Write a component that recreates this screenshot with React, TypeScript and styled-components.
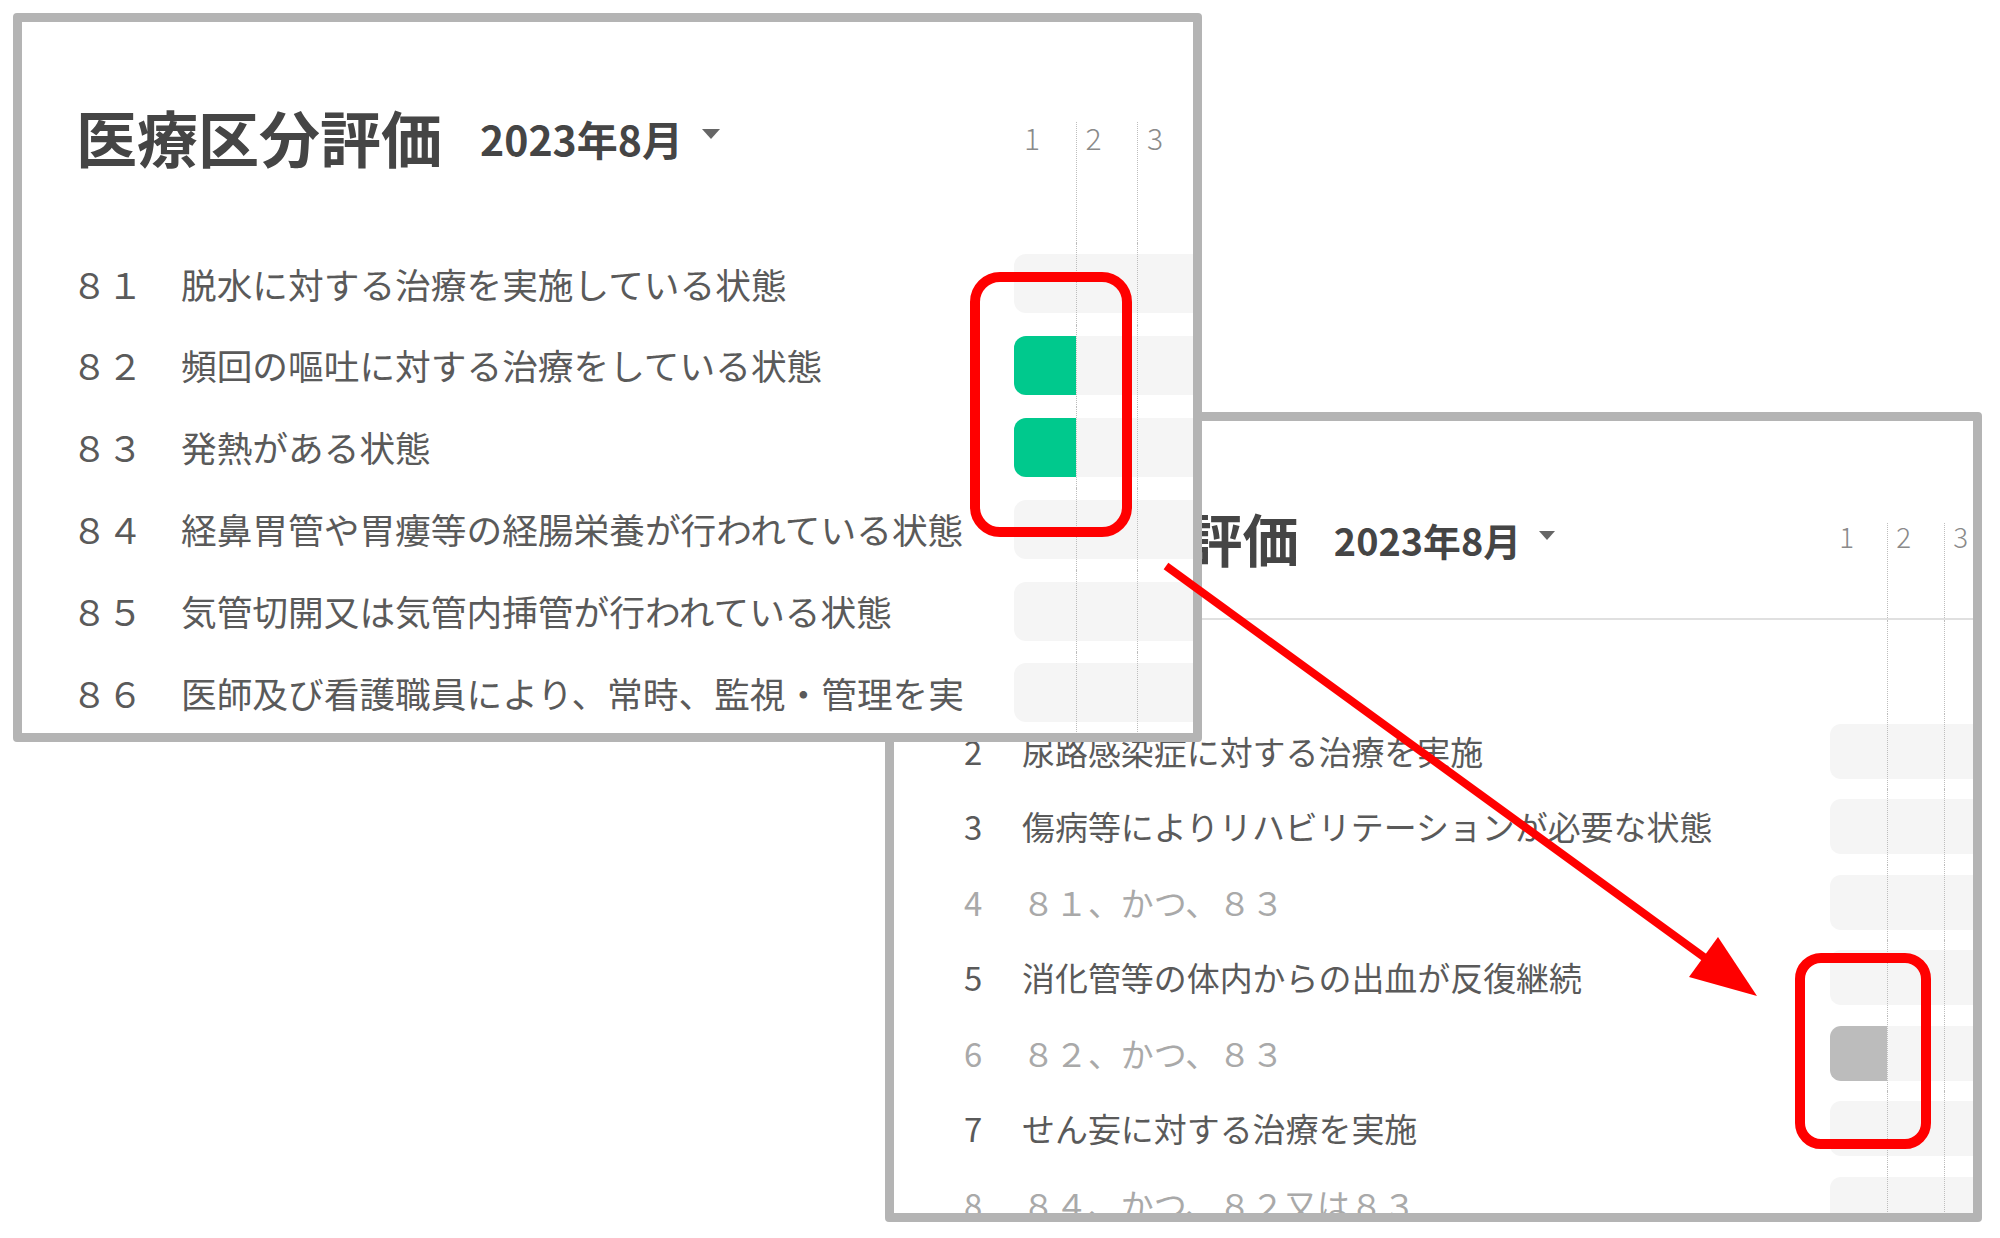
import React from "react";
import styled, { createGlobalStyle, css } from "styled-components";

type Frame = { x: number; y: number; w: number; h: number; z: number };

type Layout = {
  s: number;
  lead: number;
  col: number;
  titleLeft: number;
  titleTop: number;
  headTop: number;
  headH: number;
  divider: boolean;
  gapH: number;
  numLeft: number;
  numW: number;
  textW: number;
  rowH: number;
  barH: number;
};

type Item = { no: string; text: string; fill?: string; muted?: boolean };

const GREEN = "#00c98d";
const GREY_FILL = "#bcbcbc";

const firstItems: Item[] = [
  { no: "８１", text: "脱水に対する治療を実施している状態" },
  { no: "８２", text: "頻回の嘔吐に対する治療をしている状態", fill: GREEN },
  { no: "８３", text: "発熱がある状態", fill: GREEN },
  { no: "８４", text: "経鼻胃管や胃瘻等の経腸栄養が行われている状態" },
  { no: "８５", text: "気管切開又は気管内挿管が行われている状態" },
  { no: "８６", text: "医師及び看護職員により、常時、監視・管理を実施している状態" },
];

const secondItems: Item[] = [
  { no: "2", text: "尿路感染症に対する治療を実施" },
  { no: "3", text: "傷病等によりリハビリテーションが必要な状態" },
  { no: "4", text: "８１、かつ、８３", muted: true },
  { no: "5", text: "消化管等の体内からの出血が反復継続" },
  { no: "6", text: "８２、かつ、８３", muted: true, fill: GREY_FILL },
  { no: "7", text: "せん妄に対する治療を実施" },
  { no: "8", text: "８４、かつ、８２又は８３", muted: true },
];

const firstLayout: Layout = {
  s: 1,
  lead: 992,
  col: 61.5,
  titleLeft: 54,
  titleTop: 77.5,
  headTop: 100,
  headH: 221,
  divider: false,
  gapH: 0,
  numLeft: 49.5,
  numW: 109.5,
  textW: 784,
  rowH: 81.8,
  barH: 59,
};

const secondLayout: Layout = {
  s: 0.923,
  lead: 936,
  col: 57,
  titleLeft: 67,
  titleTop: 83,
  headTop: 102,
  headH: 197,
  divider: true,
  gapH: 93.5,
  numLeft: 70,
  numW: 58,
  textW: 760,
  rowH: 75.5,
  barH: 55,
};

const GlobalStyle = createGlobalStyle`
  html, body {
    margin: 0;
    padding: 0;
    background: #fff;
  }
  body {
    font-family: "Noto Sans CJK JP", "Noto Sans", sans-serif;
  }
  * {
    box-sizing: border-box;
  }
`;

const Canvas = styled.div`
  position: relative;
  width: 2000px;
  height: 1238px;
  overflow: hidden;
  background: #fff;
`;

const Window = styled.section<{ $f: Frame }>`
  position: absolute;
  left: ${(p) => p.$f.x}px;
  top: ${(p) => p.$f.y}px;
  width: ${(p) => p.$f.w}px;
  height: ${(p) => p.$f.h}px;
  z-index: ${(p) => p.$f.z};
  display: flex;
  flex-direction: column;
  border: 9px solid #b4b4b4;
  border-radius: 4px;
  background: #fff;
  overflow: hidden;
`;

const Header = styled.header<{ $l: Layout }>`
  flex-shrink: 0;
  display: grid;
  grid-template-columns: ${(p) => p.$l.lead}px repeat(3, ${(p) => p.$l.col}px);
  height: ${(p) => p.$l.headH + (p.$l.divider ? 2 : 0)}px;
  ${(p) =>
    p.$l.divider &&
    css`
      border-bottom: 2px solid #e0e0e0;
    `}
`;

const TitleRow = styled.div<{ $l: Layout }>`
  align-self: start;
  display: flex;
  align-items: center;
  margin-top: ${(p) => p.$l.titleTop}px;
  padding-left: ${(p) => p.$l.titleLeft}px;
  white-space: nowrap;
`;

const Title = styled.h1<{ $s: number }>`
  margin: 0;
  font-size: ${(p) => 61 * p.$s}px;
  line-height: 1.2;
  font-weight: 700;
  color: #454545;
`;

const Month = styled.span<{ $s: number }>`
  margin-left: ${(p) => 38 * p.$s}px;
  padding-top: ${(p) => 4 * p.$s}px;
  font-size: ${(p) => 41 * p.$s}px;
  line-height: 1.2;
  font-weight: 700;
  color: #454545;
`;

const Caret = styled.span<{ $s: number }>`
  width: 0;
  height: 0;
  margin-left: ${(p) => 19 * p.$s}px;
  margin-top: ${(p) => -5 * p.$s}px;
  border-left: ${(p) => 9 * p.$s}px solid transparent;
  border-right: ${(p) => 9 * p.$s}px solid transparent;
  border-top: ${(p) => 10 * p.$s}px solid #666;
`;

const ColumnCell = styled.div<{ $line: boolean }>`
  position: relative;
  display: flex;
  align-items: center;
  ${(p) =>
    p.$line &&
    css`
      &::before {
        content: "";
        position: absolute;
        left: 0;
        top: 0;
        bottom: 0;
        border-left: 1px dotted #bdbdbd;
        z-index: 1;
      }
    `}
`;

const HeadCell = styled(ColumnCell)<{ $l: Layout }>`
  align-items: flex-start;
  margin-top: ${(p) => p.$l.headTop}px;
  padding-left: ${(p) => 10 * p.$l.s}px;
  font-size: ${(p) => 30 * p.$l.s}px;
  line-height: ${(p) => 30 * p.$l.s}px;
  font-weight: 300;
  color: #8a8a8a;
`;

const List = styled.div`
  display: flex;
  flex-direction: column;
`;

const Row = styled.div<{ $l: Layout; $h?: number }>`
  flex-shrink: 0;
  display: grid;
  grid-template-columns: ${(p) => p.$l.lead}px repeat(3, ${(p) => p.$l.col}px);
  height: ${(p) => p.$h ?? p.$l.rowH}px;
`;

const Label = styled.div<{ $l: Layout; $muted?: boolean }>`
  display: flex;
  align-items: center;
  padding-left: ${(p) => p.$l.numLeft}px;
  font-size: ${(p) => 35.7 * p.$l.s}px;
  line-height: 1.3;
  color: ${(p) => (p.$muted ? "#a9a9a9" : "#5a5a5a")};
  white-space: nowrap;
`;

const Num = styled.span<{ $w: number }>`
  flex-shrink: 0;
  width: ${(p) => p.$w}px;
`;

const Text = styled.span<{ $w: number }>`
  max-width: ${(p) => p.$w}px;
  overflow: hidden;
`;

const Seg = styled.div<{ $h: number; $fill: string; $r: number }>`
  width: 100%;
  height: ${(p) => p.$h}px;
  background: ${(p) => p.$fill};
  border-radius: ${(p) => (p.$r ? `${p.$r}px 0 0 ${p.$r}px` : "0")};
`;

const Marks = styled.svg`
  position: absolute;
  left: 0;
  top: 0;
  z-index: 10;
  pointer-events: none;
`;

const BAR_BG = "#f5f5f5";

const ChartCells = ({ l, fill }: { l: Layout; fill?: string | null }) => (
  <>
    {[0, 1, 2].map((i) => (
      <ColumnCell key={i} $line={i > 0}>
        {fill !== null && (
          <Seg
            $h={l.barH}
            $fill={i === 0 && fill ? fill : BAR_BG}
            $r={i === 0 ? 12 * l.s : 0}
          />
        )}
      </ColumnCell>
    ))}
  </>
);

const Panel = ({ frame, l, items }: { frame: Frame; l: Layout; items: Item[] }) => (
  <Window $f={frame}>
    <Header $l={l}>
      <TitleRow $l={l}>
        <Title $s={l.s}>医療区分評価</Title>
        <Month $s={l.s}>2023年8月</Month>
        <Caret $s={l.s} />
      </TitleRow>
      {["1", "2", "3"].map((n, i) => (
        <HeadCell key={n} $l={l} $line={i > 0}>
          {n}
        </HeadCell>
      ))}
    </Header>
    <List>
      {l.gapH > 0 && (
        <Row $l={l} $h={l.gapH}>
          <div />
          <ChartCells l={l} fill={null} />
        </Row>
      )}
      {items.map((it) => (
        <Row key={it.no} $l={l}>
          <Label $l={l} $muted={it.muted}>
            <Num $w={l.numW}>{it.no}</Num>
            <Text $w={l.textW}>{it.text}</Text>
          </Label>
          <ChartCells l={l} fill={it.fill} />
        </Row>
      ))}
    </List>
  </Window>
);

const App = () => {
  return (
    <>
      <GlobalStyle />
      <Canvas>
        <Panel
          frame={{ x: 885, y: 412, w: 1097, h: 810, z: 1 }}
          l={secondLayout}
          items={secondItems}
        />
        <Panel
          frame={{ x: 13, y: 13, w: 1189, h: 729, z: 2 }}
          l={firstLayout}
          items={firstItems}
        />
        <Marks width="2000" height="1238" viewBox="0 0 2000 1238">
          <rect x="975" y="277" width="152" height="255" rx="25" fill="none" stroke="#ff0000" strokeWidth="10" />
          <rect x="1800" y="958" width="126" height="186" rx="21" fill="none" stroke="#ff0000" strokeWidth="10" />
          <line x1="1166" y1="566" x2="1712" y2="963" stroke="#ff0000" strokeWidth="8" />
          <polygon points="1757,996 1689,977 1718,937" fill="#ff0000" />
        </Marks>
      </Canvas>
    </>
  );
};

export default App;
